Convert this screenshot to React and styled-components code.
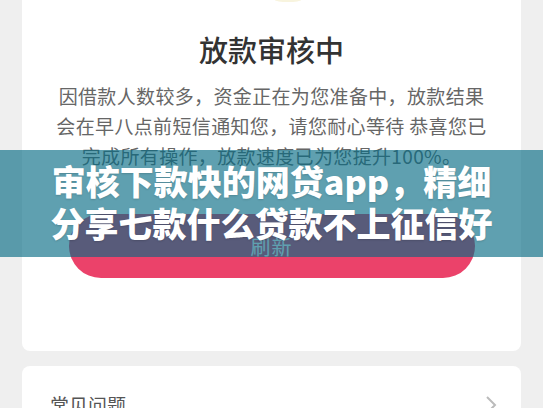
import React from "react";
import styled, { createGlobalStyle } from "styled-components";

const font = `"Noto Sans CJK SC", "Noto Sans", sans-serif`;

const GlobalStyle = createGlobalStyle`
  html, body {
    margin: 0;
    padding: 0;
    background: #efefef;
    font-family: ${font};
  }
`;

const Page = styled.div`
  position: relative;
  width: 543px;
  height: 408px;
  overflow: hidden;
  background: #efefef;
  padding: 0 22px;
  box-sizing: border-box;
`;

const Card = styled.div`
  background: #fff;
  border-radius: ${({ $cut }) => ($cut ? "0 0 8px 8px" : "8px")};
  display: flex;
  flex-direction: column;
  align-items: center;
`;

const StatusCard = styled(Card)`
  padding: 0 20px 73px;
`;

const IconStub = styled.svg`
  display: block;
  margin-left: 32px;
`;

const Title = styled.h1`
  margin: 29px 0 0;
  font-size: 29px;
  line-height: 36px;
  font-weight: 500;
  color: #333;
`;

const Message = styled.p`
  margin: 14px 0 0;
  font-size: 19px;
  line-height: 30px;
  letter-spacing: 0.35px;
  color: #666;
  text-align: center;
  white-space: nowrap;
`;

const RefreshButton = styled.button`
  margin-top: 43px;
  width: 406px;
  height: 64px;
  border: none;
  border-radius: 32px;
  background: #eb426a;
  color: #fff;
  font-family: ${font};
  font-size: 20px;
  letter-spacing: 1px;
`;

const FaqCard = styled(Card)`
  margin-top: 15px;
  flex-direction: row;
  justify-content: space-between;
  padding: 24px 24px 24px 28px;
`;

const FaqLabel = styled.span`
  font-size: 19px;
  line-height: 30px;
  color: #555;
`;

const Banner = styled.div`
  position: absolute;
  left: 0;
  right: 0;
  top: 150px;
  height: 107px;
  background: rgba(5, 106, 132, 0.64);
  display: flex;
  flex-direction: column;
  align-items: center;
  justify-content: center;
  padding-bottom: 4px;
  box-sizing: border-box;
`;

const BannerLine = styled.div`
  font-size: 34px;
  line-height: 42px;
  font-weight: 900;
  color: #fff;
  white-space: nowrap;
  text-shadow: 0 1px 2px rgba(0, 0, 0, 0.15);
`;

const Chevron = () => (
  <svg width="12" height="20" viewBox="0 0 12 20">
    <path d="M2 2l8 8-8 8" fill="none" stroke="#bbb" strokeWidth="2" />
  </svg>
);

export default function App() {
  return (
    <>
      <GlobalStyle />
      <Page>
        <StatusCard $cut>
          <IconStub width="28" height="2" viewBox="0 0 28 2">
            <ellipse cx="14" cy="0" rx="13" ry="2" fill="#f8f4de" />
          </IconStub>
          <Title>放款审核中</Title>
          <Message>
            因借款人数较多，资金正在为您准备中，放款结果
            <br />
            会在早八点前短信通知您，请您耐心等待 恭喜您已
            <br />
            完成所有操作，放款速度已为您提升100%。
          </Message>
          <RefreshButton>刷新</RefreshButton>
        </StatusCard>
        <FaqCard>
          <FaqLabel>常见问题</FaqLabel>
          <Chevron />
        </FaqCard>
        <Banner>
          <BannerLine>审核下款快的网贷app，精细</BannerLine>
          <BannerLine>分享七款什么贷款不上征信好</BannerLine>
        </Banner>
      </Page>
    </>
  );
}
